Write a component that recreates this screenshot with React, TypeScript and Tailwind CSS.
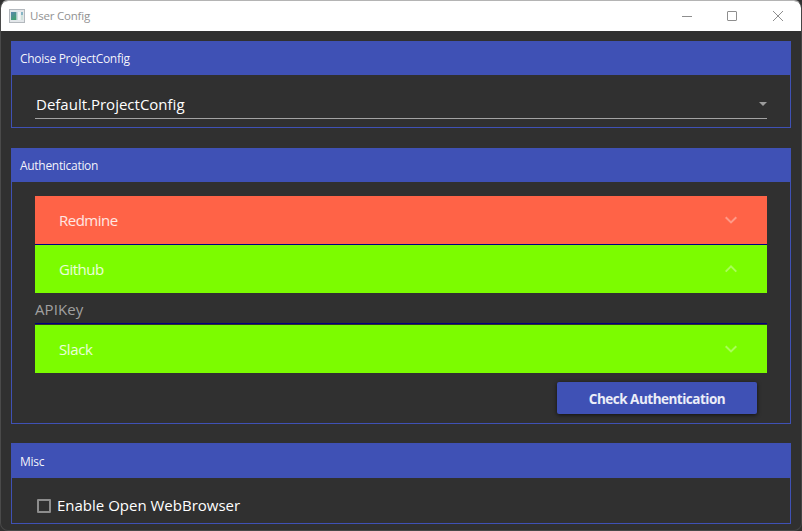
import type { ReactNode } from "react";

function Panel({ title, className, headerClass, children }: { title: string; className: string; headerClass: string; children: ReactNode }) {
  return (
    <section className={`flex flex-col border border-[#3f51b5] ${className}`}>
      <header className={`flex shrink-0 items-center bg-[#3f51b5] pl-2 text-[12px] text-white/95 ${headerClass}`}>
        {title}
      </header>
      {children}
    </section>
  );
}

function Chevron({ up = false }: { up?: boolean }) {
  return (
    <svg width="12" height="8" viewBox="0 0 12 8" className="text-white/35" fill="none" stroke="currentColor" strokeWidth="2">
      <path d={up ? "M0.7 6.6 6 1.4l5.3 5.2" : "M0.7 1.2 6 6.4l5.3-5.2"} />
    </svg>
  );
}

function Expander({ label, color, up, tracking }: { label: string; color: string; up?: boolean; tracking: string }) {
  return (
    <div className={`flex h-12 shrink-0 items-center justify-between pr-[30px] pl-6 ${color}`}>
      <span className={`text-[15px] text-white/85 ${tracking}`}>{label}</span>
      <Chevron up={up} />
    </div>
  );
}

function AppIcon() {
  return (
    <svg width="16" height="14" viewBox="0 0 16 14" className="shrink-0">
      <defs>
        <linearGradient id="pane" x1="0" y1="0" x2="0.6" y2="1">
          <stop offset="0" stopColor="#5b86b0" />
          <stop offset="1" stopColor="#43a06f" />
        </linearGradient>
      </defs>
      <rect x="0.5" y="0.5" width="15" height="13" fill="#e3e7ea" stroke="#b3b8bd" />
      <rect x="2" y="3" width="5.5" height="8" fill="url(#pane)" />
      <rect x="7.5" y="3" width="1" height="8" fill="#b5cfd0" />
      <rect x="9" y="3" width="2.5" height="8" fill="#f4f5f6" />
      <rect x="12" y="3" width="2" height="3" fill="#86b5c5" />
      <rect x="12" y="6" width="2" height="5" fill="#cfe2dc" />
    </svg>
  );
}

export default function App() {
  return (
    <div className="h-[531px] w-[802px] overflow-hidden bg-[#303030] font-['Open_Sans','Noto_Sans',sans-serif]">
      <div className="flex h-[531px] w-[802px] flex-col overflow-hidden rounded-[8px] border border-t-[#b4b4b4] border-r-[#454545] border-b-[#484848] border-l-[#4a4a4a] bg-[#303030]">
        <div className="flex h-[30px] shrink-0 items-center bg-white pl-2">
          <AppIcon />
          <span className="ml-[5px] grow text-[11.5px] tracking-[-0.2px] text-[#929292]">User Config</span>
          <svg width="106" height="12" viewBox="0 0 106 12" className="mr-[15px]" fill="none" stroke="#8e8e8e">
            <path d="M2 6.5h10" />
            <rect x="47.5" y="1.5" width="9" height="9" rx="0.5" />
            <path d="M93 1l10 10M103 1 93 11" />
          </svg>
        </div>
        <main className="flex flex-col px-[10px] pt-[10px]">
          <Panel title="Choise ProjectConfig" className="h-[87px]" headerClass="h-[33px] tracking-[-0.3px]">
            <div className="mx-[23px] mt-[16px] flex h-[28px] items-center justify-between border-b border-[#a3a3a3]">
              <span className="pl-px text-[15px] text-white">Default.ProjectConfig</span>
              <svg width="8" height="4" viewBox="0 0 8 4" className="mb-[2px]" fill="#9c9c9c"><path d="M0 0h8L4 4z" /></svg>
            </div>
          </Panel>
          <Panel title="Authentication" className="mt-5 h-[276px]" headerClass="h-[33px] tracking-[-0.3px]">
            <div className="mx-[23px] mt-[14px] flex flex-col">
              <Expander label="Redmine" color="bg-[#ff6347]" tracking="tracking-[-0.5px]" />
              <div className="border-t border-[#000080]">
                <Expander label="Github" color="bg-[#7cfc00]" tracking="tracking-[-0.5px]" up />
                <div className="flex h-[30px] items-center pt-[3px] text-[15px] tracking-[0.1px] text-[#a0a0a0]">APIKey</div>
              </div>
              <div className="border-t border-[#000080] pt-px">
                <Expander label="Slack" color="bg-[#7cfc00]" tracking="tracking-[-0.4px]" />
              </div>
              <button className="mt-[9px] mr-[10px] h-8 w-[200px] self-end rounded-[2px] bg-[#3f51b5] pt-[2px] text-[13.5px] font-bold tracking-[-0.5px] text-white/90 shadow-[0_1px_4px_rgba(0,0,0,0.65)]">
                Check Authentication
              </button>
            </div>
          </Panel>
          <Panel title="Misc" className="mt-[19px] h-[81px]" headerClass="h-[34px] pt-px tracking-[-0.3px]">
            <label className="mt-[18px] ml-[25px] flex h-5 items-center gap-[6px] text-[15px] text-white">
              <span className="size-[14px] rounded-[1px] border-2 border-[#8d8d8d]" />
              <span className="pb-[2px]">Enable Open WebBrowser</span>
            </label>
          </Panel>
        </main>
      </div>
    </div>
  );
}
